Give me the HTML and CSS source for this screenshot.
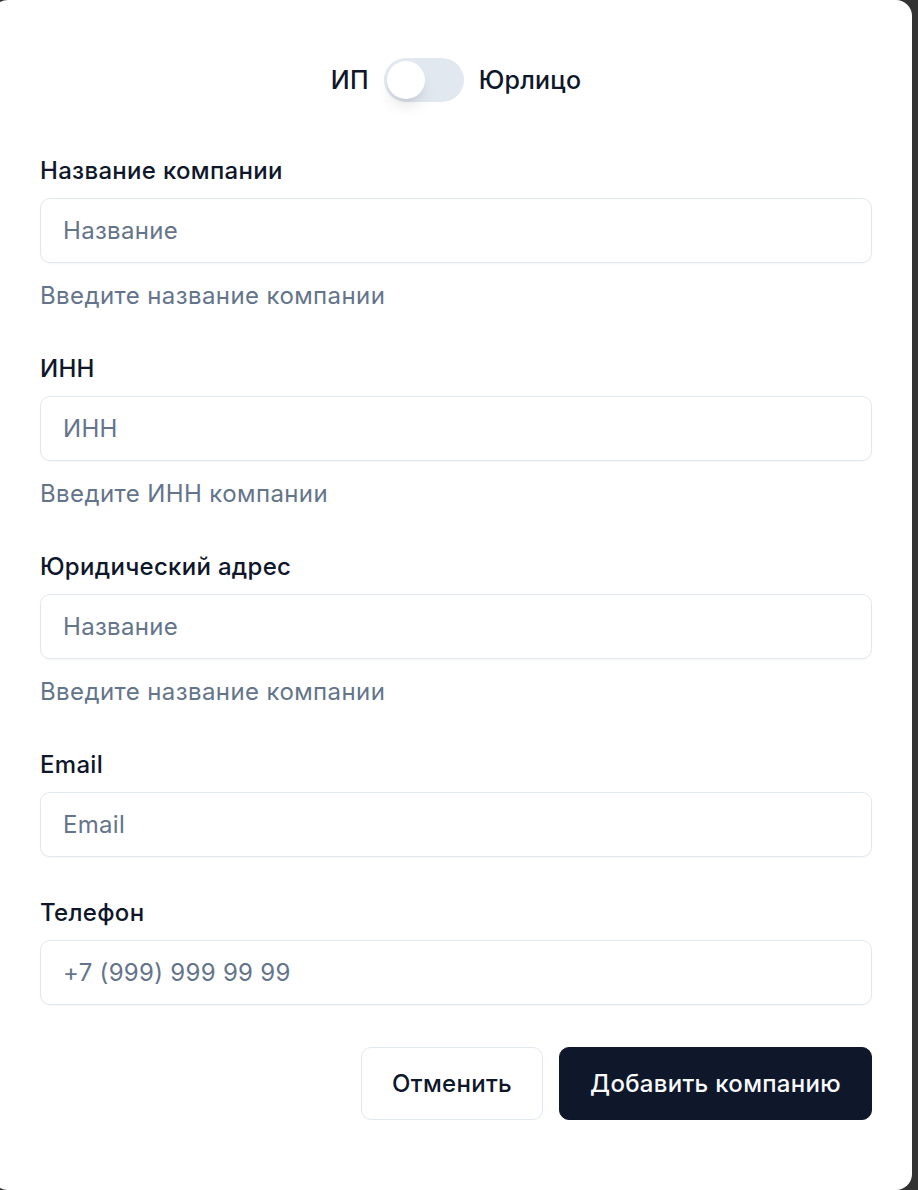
FILE: index.html
```html
<!DOCTYPE html>
<html lang="ru">
<head>
    <meta charset="UTF-8">
    <meta name="viewport" content="width=device-width, initial-scale=1.0">
    <title>Добавить компанию</title>
    <link rel="stylesheet" href="styles.css">
</head>
<body>
    <div class="dialog">
        <div class="type-switch">
            <span class="switch-label">ИП</span>
            <button type="button" class="switch" role="switch" aria-checked="false">
                <span class="switch-thumb"></span>
            </button>
            <span class="switch-label">Юрлицо</span>
        </div>

        <form class="company-form">
            <div class="fields">
                <div class="field">
                    <label for="name">Название компании</label>
                    <input type="text" id="name" placeholder="Название">
                    <p class="hint">Введите название компании</p>
                </div>

                <div class="field">
                    <label for="inn">ИНН</label>
                    <input type="text" id="inn" placeholder="ИНН">
                    <p class="hint">Введите ИНН компании</p>
                </div>

                <div class="field">
                    <label for="address">Юридический адрес</label>
                    <input type="text" id="address" placeholder="Название">
                    <p class="hint">Введите название компании</p>
                </div>

                <div class="field">
                    <label for="email">Email</label>
                    <input type="email" id="email" placeholder="Email">
                </div>

                <div class="field">
                    <label for="phone">Телефон</label>
                    <input type="tel" id="phone" placeholder="+7 (999) 999 99 99">
                </div>
            </div>

            <div class="actions">
                <button type="button" class="btn btn-outline">Отменить</button>
                <button type="submit" class="btn btn-primary">Добавить компанию</button>
            </div>
        </form>
    </div>
</body>
</html>
```

FILE: styles.css
```css
* {
    box-sizing: border-box;
}

html, body {
    margin: 0;
    height: 100%;
    overflow: hidden;
}

body {
    background-color: #333333;
    font-family: Inter, "Noto Sans", sans-serif;
    color: #0f172a;
}

.dialog {
    margin-left: -8px;
    width: 920px;
    height: 1190px;
    background-color: #ffffff;
    border-radius: 16px;
    padding: 58px 40px 0 48px;
}

.type-switch {
    display: flex;
    justify-content: center;
    align-items: center;
    gap: 15px;
    margin-bottom: 58px;
}

.switch-label {
    font-size: 25px;
    font-weight: 500;
    line-height: 44px;
    letter-spacing: 0.2px;
}

.switch {
    width: 80px;
    height: 44px;
    padding: 0 3px;
    border: none;
    border-radius: 22px;
    background-color: #e2e8f0;
    display: flex;
    align-items: center;
    cursor: pointer;
}

.switch-thumb {
    width: 38px;
    height: 38px;
    border-radius: 50%;
    background-color: #ffffff;
    box-shadow: 0 10px 15px -3px rgba(0, 0, 0, 0.1), 0 4px 6px -4px rgba(0, 0, 0, 0.1);
}

.fields {
    display: flex;
    flex-direction: column;
    gap: 45px;
}

.field {
    display: flex;
    flex-direction: column;
    gap: 16px;
}

label {
    font-size: 24px;
    font-weight: 500;
    line-height: 22px;
    letter-spacing: 0.3px;
}

input {
    height: 65px;
    padding: 0 22px;
    border: 1px solid #e2e8f0;
    border-radius: 10px;
    font-family: inherit;
    font-size: 24px;
    letter-spacing: 0.3px;
    color: #0f172a;
    box-shadow: 0 1px 2px rgba(0, 0, 0, 0.04);
}

input::placeholder {
    color: #64748b;
}

.hint {
    margin: 0;
    font-size: 24px;
    line-height: 34px;
    letter-spacing: 0.4px;
    color: #64748b;
}

.actions {
    display: flex;
    justify-content: flex-end;
    gap: 16px;
    margin-top: 42px;
}

.btn {
    height: 73px;
    padding: 0 30px;
    border-radius: 10px;
    font-family: inherit;
    font-size: 24px;
    font-weight: 500;
    letter-spacing: 0.3px;
    cursor: pointer;
}

.btn-outline {
    background-color: #ffffff;
    border: 1px solid #e2e8f0;
    color: #0f172a;
}

.btn-primary {
    background-color: #0f172a;
    border: 1px solid #0f172a;
    color: #f8fafc;
}
```
